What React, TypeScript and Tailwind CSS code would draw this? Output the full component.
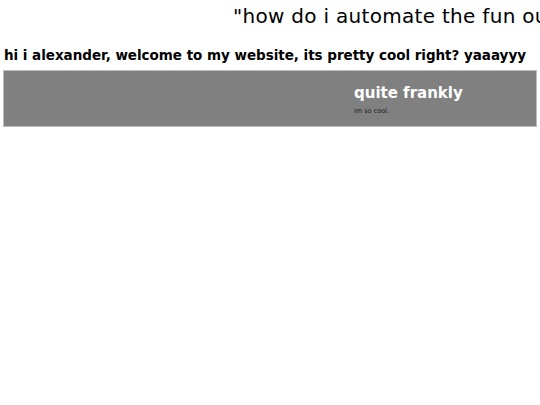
export default function App() {
  return (
    <div className="w-[540px] h-[405px] overflow-hidden bg-white text-black" style={{ fontFamily: '"DejaVu Sans", Verdana, sans-serif' }}>
      <div className="whitespace-nowrap pl-[233px] pt-[4px] text-[20px] leading-[24px] tracking-[0.3px]">"how do i automate the fun out of everything"</div>
      <div className="whitespace-nowrap pl-[4px] pt-[19px] text-[13.5px] leading-[16px] font-bold tracking-[-0.03px]">hi i alexander, welcome to my website, its pretty cool right? yaaayyy</div>
      <div className="mx-[3px] mt-[7px] h-[57px] border border-[#bdbdbd] bg-[#808080] pl-[350px] pt-[13px]">
        <div className="text-[15px] leading-[18px] font-bold text-white">quite frankly</div>
        <div className="mt-[5px] text-[6.5px] leading-[8px] text-[#1a1a1a]">im so cool.</div>
      </div>
    </div>
  );
}
